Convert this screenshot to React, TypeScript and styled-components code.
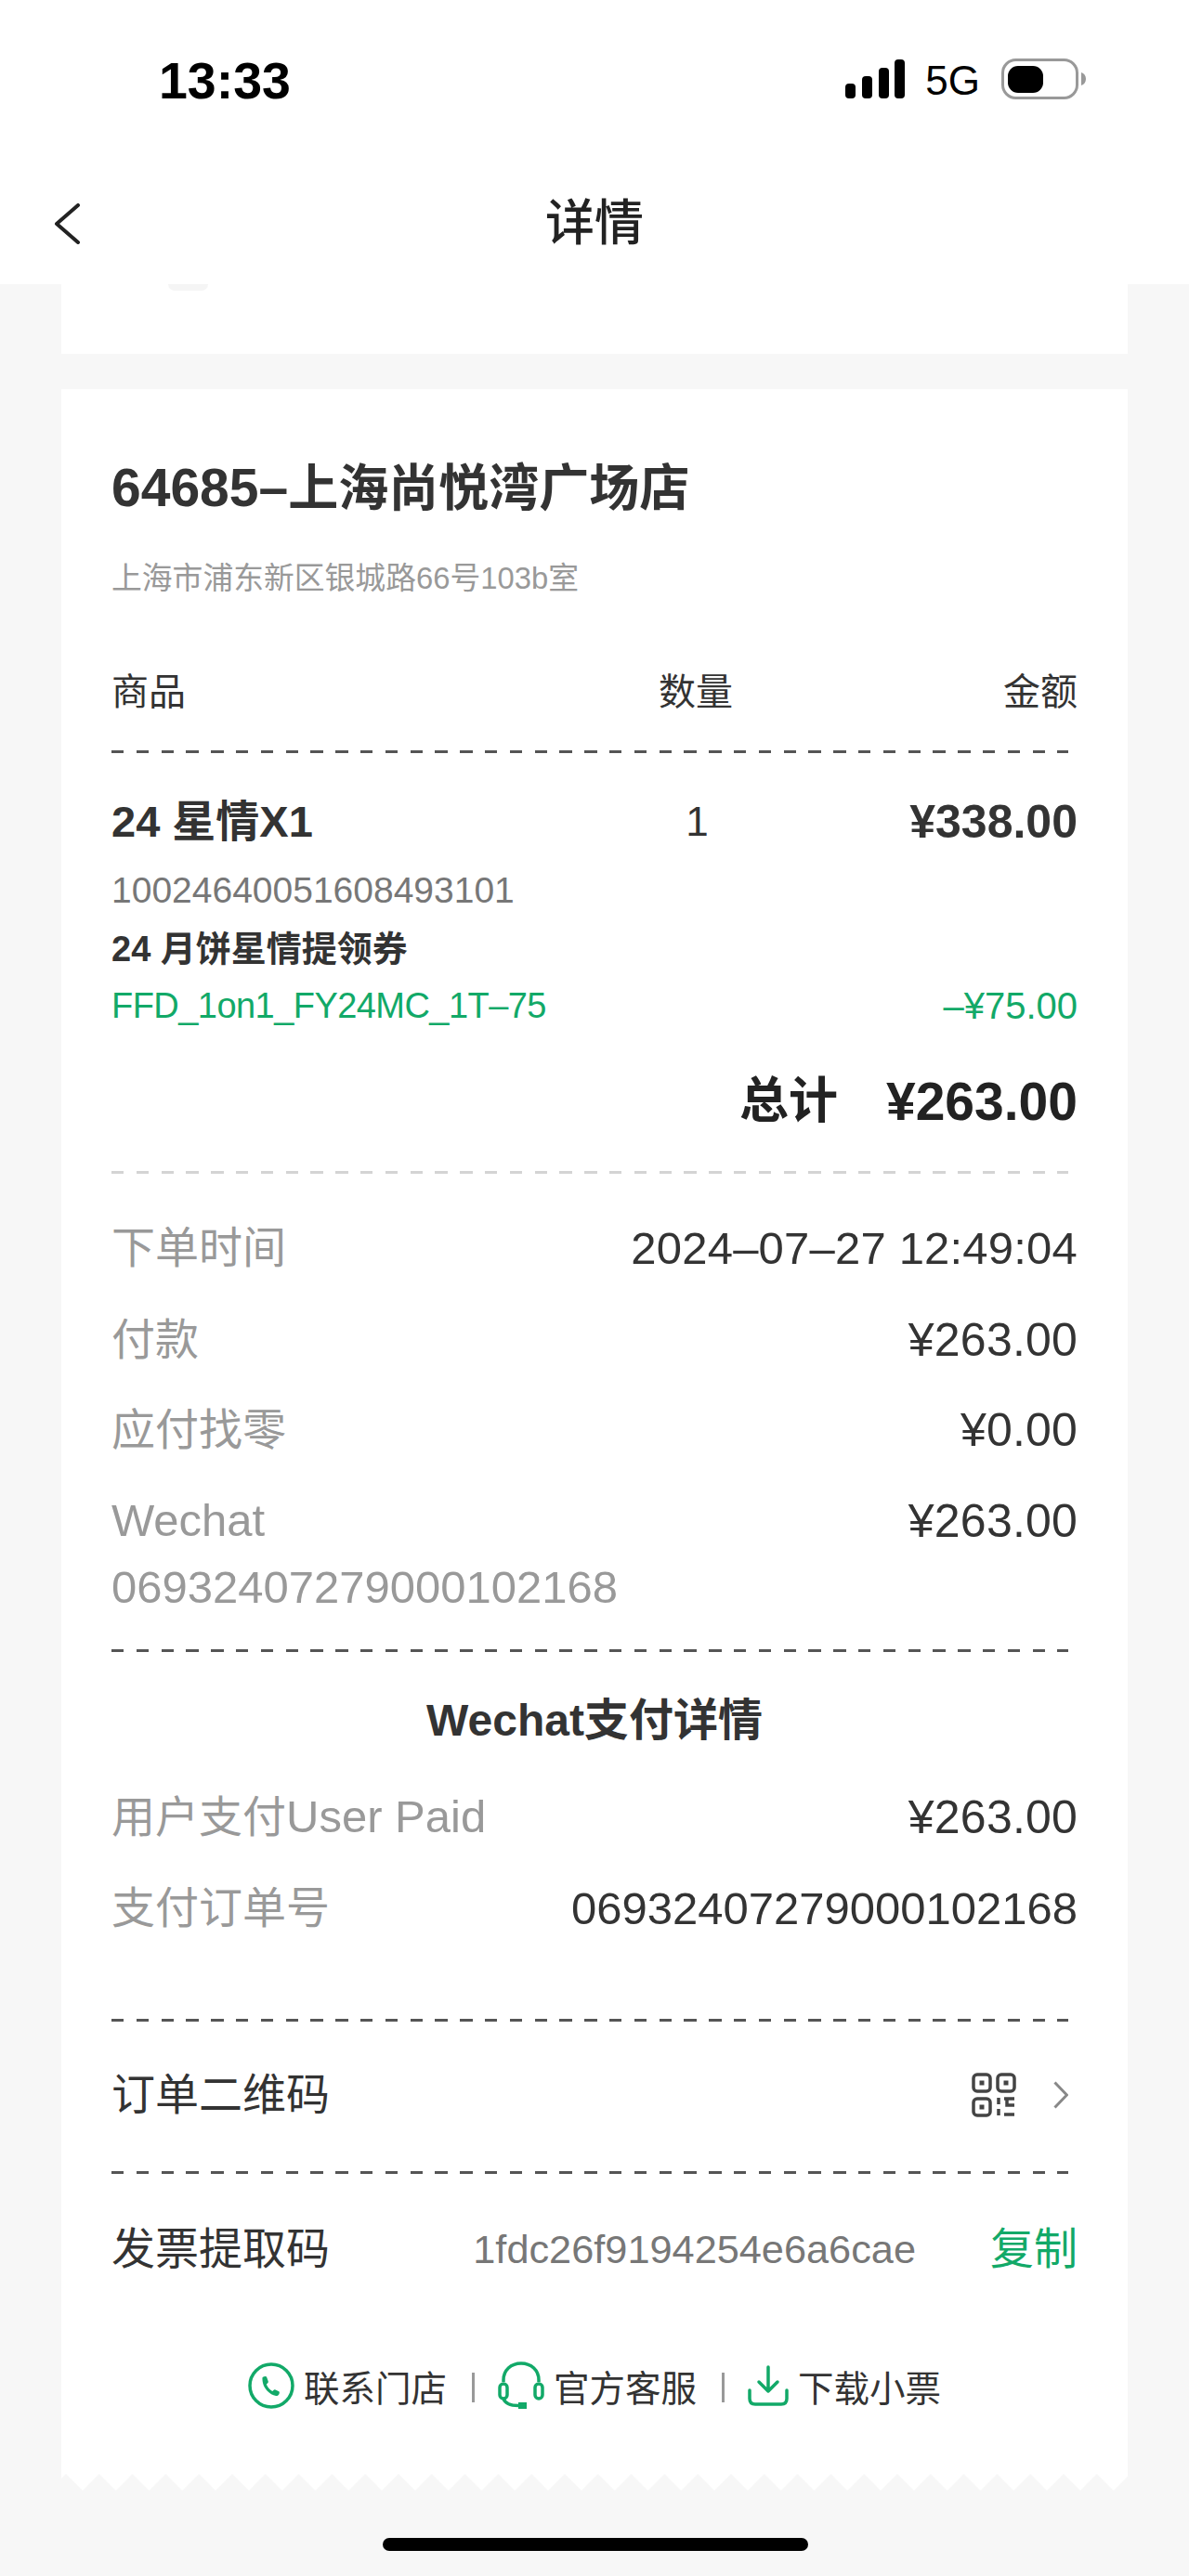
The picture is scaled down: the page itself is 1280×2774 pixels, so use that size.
import { createGlobalStyle, styled } from "styled-components";

const GREEN = "#12a968";

const GlobalStyle = createGlobalStyle`
  html, body {
    margin: 0;
    padding: 0;
    background: #f7f7f7;
  }
  * {
    box-sizing: border-box;
  }
`;

const Page = styled.div`
  width: 1280px;
  height: 2774px;
  overflow: hidden;
  position: relative;
  background: #f7f7f7;
  color: #333;
  font-family: "Liberation Sans", "Noto Sans CJK SC", sans-serif;
`;

const Header = styled.header`
  background: #fff;
  height: 306px;
`;

const StatusBar = styled.div`
  height: 170px;
  padding: 52px 110px 0 171px;
  display: flex;
  justify-content: space-between;
  align-items: flex-start;
`;

const Clock = styled.div`
  font-size: 55.5px;
  line-height: 70px;
  font-weight: 700;
  color: #000;
`;

const StatusIcons = styled.div`
  display: flex;
  align-items: center;
  height: 70px;
  margin-top: -2px;
`;

const Network = styled.span`
  font-size: 44px;
  line-height: 70px;
  color: #000;
  margin: 3px 23px 0 22px;
`;

const NavBar = styled.div`
  height: 136px;
  display: grid;
  grid-template-columns: 1fr auto 1fr;
  align-items: center;
  padding: 6px 0 0 58px;
`;

const NavTitle = styled.h1`
  margin: 0 0 0 -58px;
  font-size: 53px;
  line-height: 70px;
  font-weight: 500;
  color: #222;
`;

const StubCard = styled.div`
  background: #fff;
  height: 75px;
  margin: 0 66px 38px;
  padding-left: 115px;
`;

const Smudge = styled.div`
  width: 43px;
  height: 7px;
  background: #f5f5f5;
  border-radius: 0 0 8px 8px;
`;

const Receipt = styled.section`
  background: #fff;
  margin: 0 66px;
  height: 2245px;
  padding: 0 54px;
  display: flex;
  flex-direction: column;
`;

const StoreName = styled.h2`
  margin: 76px 0 0;
  font-size: 54px;
  line-height: 60px;
  font-weight: 600;
  color: #333;
  white-space: nowrap;
`;

const StoreCode = styled.span`
  font-size: 57px;
  font-weight: 700;
`;

const Address = styled.div`
  margin-top: 45px;
  font-size: 32.8px;
  line-height: 44px;
  color: #999;
`;

const TableHeader = styled.div`
  margin-top: 72px;
  display: grid;
  grid-template-columns: 589px 81px 1fr;
  font-size: 40px;
  line-height: 56px;
  color: #333;
`;

const AmountHead = styled.span`
  text-align: right;
`;

const Dash = styled.div<{ $top: number; $light?: boolean }>`
  margin-top: ${(p) => p.$top}px;
  flex: none;
  width: 1030px;
  height: 3px;
  background: repeating-linear-gradient(
    90deg,
    ${(p) => (p.$light ? "#d4d4d4" : "#555")} 0 13.4px,
    transparent 13.4px 26.8px
  );
`;

const ItemRow = styled.div`
  margin-top: 44px;
  display: grid;
  grid-template-columns: 589px 81px 1fr;
  line-height: 60px;
  font-size: 47px;
`;

const ItemName = styled.div`
  font-weight: 700;
`;

const ItemQty = styled.div`
  text-align: center;
  font-size: 44px;
  padding-left: 2px;
`;

const ItemPrice = styled.div`
  text-align: right;
  font-weight: 700;
  font-size: 50px;
  white-space: nowrap;
`;

const Sku = styled.div`
  margin-top: 22px;
  font-size: 39px;
  line-height: 44px;
  color: #777;
`;

const CouponName = styled.div`
  margin-top: 19px;
  font-size: 38px;
  line-height: 44px;
  font-weight: 700;
  color: #333;
`;

const PromoRow = styled.div`
  margin-top: 17px;
  display: flex;
  justify-content: space-between;
  line-height: 44px;
  color: ${GREEN};
`;

const PromoCode = styled.span`
  font-size: 38px;
  letter-spacing: -0.55px;
`;

const PromoAmount = styled.span`
  font-size: 40px;
`;

const TotalRow = styled.div`
  margin-top: 49px;
  display: flex;
  justify-content: flex-end;
  gap: 52px;
  font-weight: 700;
  line-height: 64px;
  color: #222;
`;

const TotalLabel = styled.span`
  font-size: 53px;
`;

const TotalValue = styled.span`
  font-size: 57px;
`;

const InfoRow = styled.div<{ $top: number }>`
  margin-top: ${(p) => p.$top}px;
  display: flex;
  justify-content: space-between;
  align-items: center;
  font-size: 47px;
  line-height: 60px;
  white-space: nowrap;
`;

const InfoLabel = styled.span`
  color: #999;
`;

const Latin = styled.span`
  font-size: 49px;
`;

const InfoValue = styled.span`
  color: #333;
  font-size: 49px;
`;

const TimeValue = styled(InfoValue)`
  letter-spacing: 0.2px;
`;

const Amount = styled.span`
  color: #333;
  font-size: 50px;
  letter-spacing: 0.2px;
`;

const SectionTitle = styled.div`
  margin-top: 44px;
  text-align: center;
  font-size: 48px;
  line-height: 60px;
  font-weight: 700;
  color: #333;
`;

const LinkLabel = styled.span`
  color: #333;
`;

const RowEnd = styled.div`
  display: flex;
  align-items: center;
  gap: 40px;
  margin-right: 10px;
`;

const InvoiceCode = styled.span`
  font-size: 43.3px;
  color: #777;
  margin-left: auto;
  margin-right: 80px;
`;

const CopyLink = styled.span`
  color: ${GREEN};
`;

const Actions = styled.div`
  margin-top: 87px;
  display: flex;
  justify-content: center;
  align-items: center;
  height: 60px;
  font-size: 38.5px;
  color: #333;
`;

const Action = styled.div`
  display: flex;
  align-items: center;
  gap: 10px;
`;

const ActionDivider = styled.div`
  width: 3px;
  height: 32px;
  background: #999;
  margin: 4px 25px 0 27px;
`;

const Teeth = styled.svg`
  display: block;
  width: 1148px;
  height: 18px;
  margin: 0 66px;
`;

const HomeBar = styled.div`
  position: absolute;
  left: 412px;
  bottom: 27px;
  width: 458px;
  height: 14px;
  border-radius: 7px;
  background: #000;
`;

const SignalIcon = () => (
  <svg width="64" height="42" viewBox="0 0 64 42">
    <rect x="0" y="26" width="11" height="16" rx="4" fill="#000" />
    <rect x="18" y="18" width="11" height="24" rx="4" fill="#000" />
    <rect x="36" y="9" width="11" height="33" rx="4" fill="#000" />
    <rect x="53" y="0" width="11" height="42" rx="4" fill="#000" />
  </svg>
);

const BatteryIcon = () => (
  <svg width="92" height="44" viewBox="0 0 92 44">
    <rect x="1.5" y="1.5" width="80" height="41" rx="14" fill="none" stroke="#999" strokeWidth="3" />
    <rect x="7" y="8" width="38" height="29" rx="11" fill="#000" />
    <path d="M86 15c3 1 5 3.5 5 7s-2 6-5 7z" fill="#999" />
  </svg>
);

const BackIcon = () => (
  <svg width="28" height="44" viewBox="0 0 28 44">
    <path d="M26 2 3 22l23 20" fill="none" stroke="#222" strokeWidth="4" strokeLinecap="round" strokeLinejoin="round" />
  </svg>
);

const QrIcon = () => (
  <svg width="48" height="48" viewBox="0 0 48 48" fill="none" stroke="#444" strokeWidth="3.5">
    <rect x="2" y="2" width="18" height="18" rx="4" />
    <rect x="28" y="2" width="18" height="18" rx="4" />
    <rect x="2" y="28" width="18" height="18" rx="4" />
    <rect x="8.5" y="8.5" width="5" height="5" fill="#444" stroke="none" />
    <rect x="34.5" y="8.5" width="5" height="5" fill="#444" stroke="none" />
    <rect x="8.5" y="34.5" width="5" height="5" fill="#444" stroke="none" />
    <path d="M29 27v7M29 39v7M35 28h11M38 28v7h8M35 45h11" />
  </svg>
);

const ChevronIcon = () => (
  <svg width="16" height="30" viewBox="0 0 16 30">
    <path d="m1.5 1.5 13 13.500-13 13.500" fill="none" stroke="#888" strokeWidth="3" />
  </svg>
);

const PhoneIcon = () => (
  <svg width="50" height="50" viewBox="0 0 50 50" fill="none">
    <circle cx="25" cy="25" r="23" stroke={GREEN} strokeWidth="3.5" />
    <path
      d="M15.5 16c-.4 6 1.800 11 5 14.500 3 3 6 5 9.500 5.500 1.600.2 3-.7 3.500-2l.3-1.200c.2-.8-.2-1.500-1-1.900l-3.300-1.500c-.8-.3-1.500-.2-2.100.5l-1 1.100c-2.400-1-5.500-4.500-6.500-7.500l1.300-1.200c.6-.5.8-1.300.5-2l-1.400-4c-.3-.9-1-1.300-1.900-1.200l-1 .1c-1.300.2-2.300 1.300-2.400 2.800z"
      fill={GREEN}
    />
  </svg>
);

const HeadsetIcon = () => (
  <svg width="50" height="52" viewBox="0 0 50 52" fill="none" stroke={GREEN} strokeWidth="3.5">
    <path d="M6 22V20C6 9.500 14 2 25 2s19 7.500 19 18v2" />
    <rect x="2" y="24" width="8" height="16" rx="4" />
    <rect x="40" y="24" width="8" height="16" rx="4" />
    <path d="M6 40c1.500 4.500 6 7.500 16 7.500" />
    <rect x="22" y="44" width="9" height="7" fill={GREEN} stroke="none" />
  </svg>
);

const DownloadIcon = () => (
  <svg width="44" height="44" viewBox="0 0 44 44" fill="none" stroke={GREEN} strokeWidth="3.5" strokeLinecap="round" strokeLinejoin="round">
    <path d="M22 2v26M12 18l10 10 10-10" />
    <path d="M2 27v9c0 4 2.500 6 6 6h28c3.500 0 6-2 6-6v-9" />
  </svg>
);

export default function App() {
  return (
    <Page>
      <GlobalStyle />
      <Header>
        <StatusBar>
          <Clock>13:33</Clock>
          <StatusIcons>
            <SignalIcon />
            <Network>5G</Network>
            <BatteryIcon />
          </StatusIcons>
        </StatusBar>
        <NavBar>
          <BackIcon />
          <NavTitle>详情</NavTitle>
        </NavBar>
      </Header>

      <StubCard>
        <Smudge />
      </StubCard>

      <Receipt>
        <StoreName>
          <StoreCode>64685–</StoreCode>上海尚悦湾广场店
        </StoreName>
        <Address>上海市浦东新区银城路66号103b室</Address>

        <TableHeader>
          <span>商品</span>
          <span>数量</span>
          <AmountHead>金额</AmountHead>
        </TableHeader>
        <Dash $top={35} />

        <ItemRow>
          <ItemName>24 星情X1</ItemName>
          <ItemQty>1</ItemQty>
          <ItemPrice>¥338.00</ItemPrice>
        </ItemRow>
        <Sku>10024640051608493101</Sku>
        <CouponName>24 月饼星情提领券</CouponName>
        <PromoRow>
          <PromoCode>FFD_1on1_FY24MC_1T–75</PromoCode>
          <PromoAmount>–¥75.00</PromoAmount>
        </PromoRow>
        <TotalRow>
          <TotalLabel>总计</TotalLabel>
          <TotalValue>¥263.00</TotalValue>
        </TotalRow>
        <Dash $top={43} $light />

        <InfoRow $top={50}>
          <InfoLabel>下单时间</InfoLabel>
          <TimeValue>2024–07–27 12:49:04</TimeValue>
        </InfoRow>
        <InfoRow $top={39}>
          <InfoLabel>付款</InfoLabel>
          <Amount>¥263.00</Amount>
        </InfoRow>
        <InfoRow $top={37}>
          <InfoLabel>应付找零</InfoLabel>
          <Amount>¥0.00</Amount>
        </InfoRow>
        <InfoRow $top={37}>
          <InfoLabel>
            <Latin>Wechat</Latin>
          </InfoLabel>
          <Amount>¥263.00</Amount>
        </InfoRow>
        <InfoRow $top={11}>
          <InfoLabel>
            <Latin>06932407279000102168</Latin>
          </InfoLabel>
        </InfoRow>
        <Dash $top={36} />

        <SectionTitle>Wechat支付详情</SectionTitle>
        <InfoRow $top={43}>
          <InfoLabel>
            用户支付<Latin>User Paid</Latin>
          </InfoLabel>
          <Amount>¥263.00</Amount>
        </InfoRow>
        <InfoRow $top={38}>
          <InfoLabel>支付订单号</InfoLabel>
          <InfoValue>06932407279000102168</InfoValue>
        </InfoRow>
        <Dash $top={89} />

        <InfoRow $top={49}>
          <LinkLabel>订单二维码</LinkLabel>
          <RowEnd>
            <QrIcon />
            <ChevronIcon />
          </RowEnd>
        </InfoRow>
        <Dash $top={52} />

        <InfoRow $top={51}>
          <LinkLabel>发票提取码</LinkLabel>
          <InvoiceCode>1fdc26f9194254e6a6cae</InvoiceCode>
          <CopyLink>复制</CopyLink>
        </InfoRow>

        <Actions>
          <Action>
            <PhoneIcon />
            联系门店
          </Action>
          <ActionDivider />
          <Action>
            <HeadsetIcon />
            官方客服
          </Action>
          <ActionDivider />
          <Action>
            <DownloadIcon />
            下载小票
          </Action>
        </Actions>
      </Receipt>

      <Teeth viewBox="0 0 1148 18">
        <defs>
          <pattern id="teeth" width="35.8" height="18" patternUnits="userSpaceOnUse" patternTransform="translate(5 0)">
            <path d="M0 0 17.9 18 35.8 0z" fill="#fff" />
          </pattern>
        </defs>
        <rect width="1148" height="18" fill="url(#teeth)" />
      </Teeth>

      <HomeBar />
    </Page>
  );
}
